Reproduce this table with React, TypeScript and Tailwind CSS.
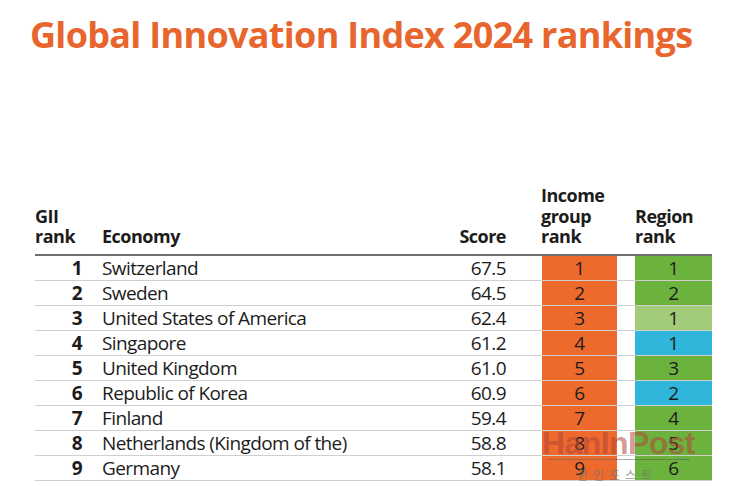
const rows = [
  { rank: 1, name: "Switzerland", score: "67.5", income: 1, region: 1, color: "bg-[#6cb33e]" },
  { rank: 2, name: "Sweden", score: "64.5", income: 2, region: 2, color: "bg-[#6cb33e]" },
  { rank: 3, name: "United States of America", score: "62.4", income: 3, region: 1, color: "bg-[#a2cc78]" },
  { rank: 4, name: "Singapore", score: "61.2", income: 4, region: 1, color: "bg-[#2fb6da]" },
  { rank: 5, name: "United Kingdom", score: "61.0", income: 5, region: 3, color: "bg-[#6cb33e]" },
  { rank: 6, name: "Republic of Korea", score: "60.9", income: 6, region: 2, color: "bg-[#2fb6da]" },
  { rank: 7, name: "Finland", score: "59.4", income: 7, region: 4, color: "bg-[#6cb33e]" },
  { rank: 8, name: "Netherlands (Kingdom of the)", score: "58.8", income: 8, region: 5, color: "bg-[#6cb33e]" },
  { rank: 9, name: "Germany", score: "58.1", income: 9, region: 6, color: "bg-[#6cb33e]" },
];

const App = () => {
  return (
    <div className="relative w-[741px] h-[486px] overflow-hidden bg-white font-['Open_Sans',sans-serif] text-[#1c1c1c]">
      {/* Title */}
      <h1 className="pl-[30px] pt-[13px] text-[36px] leading-[44px] font-bold tracking-[-0.7px] text-[#e8652d]">
        Global Innovation Index 2024 rankings
      </h1>

      {/* Table */}
      <div className="ml-[35px] mt-[128px] w-[677px]">
        {/* Header */}
        <div className="flex items-end pb-[7px] border-b-2 border-[#6f6f6f] text-[18px] leading-[20.5px] font-bold tracking-[-0.5px]">
          <div className="w-[50px]">GII<br />rank</div>
          <div className="ml-[17px] w-[348px]">Economy</div>
          <div className="w-[56px] text-right">Score</div>
          <div className="ml-[35px] w-[75px]">Income<br />group<br />rank</div>
          <div className="ml-[19px] w-[77px]">Region<br />rank</div>
        </div>

        {/* Body */}
        {rows.map((r) => (
          <div key={r.rank} className="flex h-[25.1px] border-b border-[#cfcfcf] text-[19px] leading-[24px] tracking-[-0.6px]">
            <div className="w-[47px] text-right font-bold">{r.rank}</div>
            <div className="ml-[20px] w-[348px]">{r.name}</div>
            <div className="w-[56px] text-right">{r.score}</div>
            <div className="ml-[36px] w-[75px] bg-[#ee6a2c] text-center">{r.income}</div>
            <div className="ml-[18px] w-[77px] text-center">
              <div className={`${r.color} h-full`}>{r.region}</div>
            </div>
          </div>
        ))}
      </div>

      {/* Watermark */}
      <div className="absolute left-[542px] top-[426px] text-[32px] leading-[34px] font-bold tracking-[-0.6px] text-[#b0443a]/55 font-['Liberation_Sans',sans-serif]">
        HanInPost
      </div>
      <div className="absolute left-[548px] top-[459px] w-[142px] h-[1px] bg-[#5a5a5a]/50" />
      <div className="absolute left-[577px] top-[467px] text-[12px] leading-[16px] tracking-[5px] text-[#707070]/70 font-['Noto_Sans_CJK_KR',sans-serif]">
        한인포스트
      </div>
    </div>
  );
};

export default App;
